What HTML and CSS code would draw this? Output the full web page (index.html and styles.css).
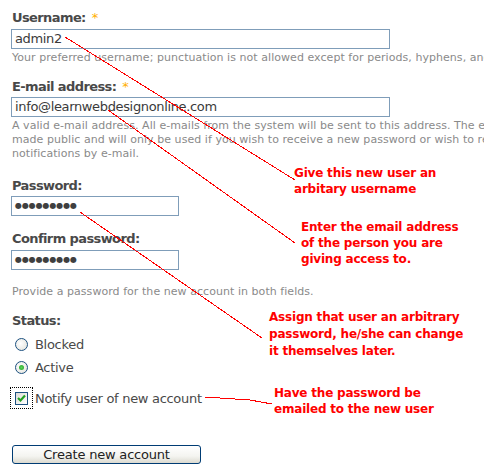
FILE: index.html
```
<!DOCTYPE html>
<html>
<head>
<meta charset="utf-8">
<link rel="stylesheet" href="styles.css">
</head>
<body>
<div class="page">
  <form class="form">
    <div class="item first">
      <label class="label">Username: <span class="req">*</span></label>
      <div class="input wide">admin2</div>
      <div class="desc">Your preferred username; punctuation is not allowed except for periods, hyphens, and underscores.</div>
    </div>
    <div class="item">
      <label class="label">E-mail address: <span class="req">*</span></label>
      <div class="input wide email">info@learnwebdesignonline.com</div>
      <div class="desc">
        <span class="line">A valid e-mail address. All e-mails from the system will be sent to this address. The e-mail address is not</span>
        <span class="line">made public and will only be used if you wish to receive a new password or wish to receive certain news or</span>
        <span class="line">notifications by e-mail.</span>
      </div>
    </div>
    <div class="item pw">
      <label class="label">Password:</label>
      <div class="input short dots">●●●●●●●●●</div>
    </div>
    <div class="item pw2">
      <label class="label">Confirm password:</label>
      <div class="input short dots">●●●●●●●●●</div>
      <div class="desc provide">Provide a password for the new account in both fields.</div>
    </div>
    <div class="item status">
      <label class="label">Status:</label>
      <div class="radio"><span class="rbtn"></span><span>Blocked</span></div>
      <div class="radio"><span class="rbtn on"></span><span>Active</span></div>
    </div>
    <div class="check">
      <span class="focus"><span class="cbox"><svg width="11" height="11" viewBox="0 0 11 11"><path d="M2 5 L4.5 7.5 L9 2.5" fill="none" stroke="#21a121" stroke-width="2.2"/></svg></span></span>
      <span>Notify user of new account</span>
    </div>
    <div class="submit"><span class="button">Create new account</span></div>
  </form>

  <svg class="lines" width="484" height="468" viewBox="0 0 484 468">
    <g stroke="#ff0000" stroke-width="1" fill="none" shape-rendering="crispEdges">
      <line x1="65" y1="37" x2="295" y2="180"/>
      <line x1="108" y1="110" x2="295" y2="243"/>
      <line x1="80" y1="212" x2="262" y2="338"/>
      <polyline points="205,397 250,400 272,404"/>
    </g>
  </svg>

  <div class="note n1">Give this new user an<br>arbitary username</div>
  <div class="note n2">Enter the email address<br>of the person you are<br>giving access to.</div>
  <div class="note n3">Assign that user an arbitrary<br>password, he/she can change<br>it themselves later.</div>
  <div class="note n4">Have the password be<br>emailed to the new user</div>
</div>
</body>
</html>
```
FILE: styles.css
```
html, body {
  margin: 0;
  padding: 0;
  background: #ffffff;
}
.page {
  position: relative;
  width: 484px;
  height: 468px;
  overflow: hidden;
  font-family: "DejaVu Sans", Verdana, sans-serif;
  color: #494949;
}
.form {
  padding-left: 11px;
  padding-top: 10px;
}
.item {
  margin-top: 14px;
}
.item.first {
  margin-top: 0;
}
.label {
  display: block;
  font-size: 13px;
  font-weight: bold;
  line-height: 16px;
  letter-spacing: -0.6px;
  margin-left: 1px;
  margin-bottom: 3px;
}
.req {
  color: #ffae00;
  font-weight: normal;
  margin-left: 2px;
}
.input {
  box-sizing: border-box;
  height: 20px;
  border: 1px solid #7f9db9;
  font-size: 13px;
  line-height: 18px;
  letter-spacing: -0.35px;
  padding-left: 3px;
  color: #3a3a3a;
  background: #fff;
}
.input.wide {
  width: 379px;
}
.input.email {
  margin-top: -1px;
}
.input.short {
  width: 168px;
}
.input.dots {
  font-size: 8px;
  letter-spacing: -0.1px;
  color: #3f3f3f;
}
.desc {
  font-size: 11px;
  line-height: 14px;
  letter-spacing: 0.05px;
  color: #8a8a8a;
  margin-top: 2px;
  margin-left: 1px;
  white-space: nowrap;
}
.desc .line {
  display: block;
}
.item.pw {
  margin-top: 17px;
}
.item.pw .label {
  margin-bottom: 2px;
}
.item.pw2 {
  margin-top: 15px;
}
.desc.provide {
  margin-top: 15px;
}
.item.status {
  margin-top: 14px;
}
.item.status .label {
  margin-bottom: 4px;
}
.radio {
  display: flex;
  align-items: center;
  height: 23px;
  font-size: 13px;
  letter-spacing: -0.3px;
  padding-left: 4px;
}
.rbtn {
  box-sizing: border-box;
  width: 13px;
  height: 13px;
  border-radius: 50%;
  border: 1px solid #1c5180;
  background: radial-gradient(circle at 40% 40%, #ffffff 0%, #e6e6e0 80%, #cfcfc8 100%);
  margin-right: 7px;
  display: flex;
  align-items: center;
  justify-content: center;
}
.rbtn.on::after {
  content: "";
  width: 5px;
  height: 5px;
  border-radius: 50%;
  background: radial-gradient(circle, #5bd35b 0%, #21a121 100%);
}
.check {
  display: flex;
  align-items: center;
  margin-top: 8px;
  height: 22px;
  font-size: 13px;
  letter-spacing: -0.3px;
}
.focus {
  box-sizing: border-box;
  width: 23px;
  height: 22px;
  margin-left: -1px;
  border: 1px dotted #000;
  display: flex;
  align-items: center;
  justify-content: center;
  margin-right: 2px;
}
.cbox {
  box-sizing: border-box;
  width: 13px;
  height: 13px;
  border: 1px solid #1c5180;
  background: linear-gradient(135deg, #dcdcd6 0%, #ffffff 100%);
  display: flex;
  align-items: center;
  justify-content: center;
}
.submit {
  margin-top: 36px;
  margin-left: 1px;
}
.button {
  box-sizing: border-box;
  display: flex;
  align-items: center;
  justify-content: center;
  width: 189px;
  height: 19px;
  border: 1px solid #003c74;
  border-radius: 3px;
  background: linear-gradient(#ffffff 0%, #f4f4f0 60%, #dcdad0 100%);
  font-size: 13px;
  letter-spacing: -0.2px;
  color: #222;
}
.lines {
  position: absolute;
  left: 0;
  top: 0;
  pointer-events: none;
}
.note {
  position: absolute;
  font-family: "DejaVu Sans", Verdana, sans-serif;
  font-weight: bold;
  font-size: 12px;
  line-height: 16px;
  letter-spacing: -0.2px;
  color: #ff0000;
  white-space: nowrap;
  -webkit-font-smoothing: none;
}
.n1 { left: 294px; top: 165px; }
.n2 { left: 301px; top: 219px; }
.n3 { left: 269px; top: 309px; line-height: 17px; }
.n4 { left: 274px; top: 385px; }
```
